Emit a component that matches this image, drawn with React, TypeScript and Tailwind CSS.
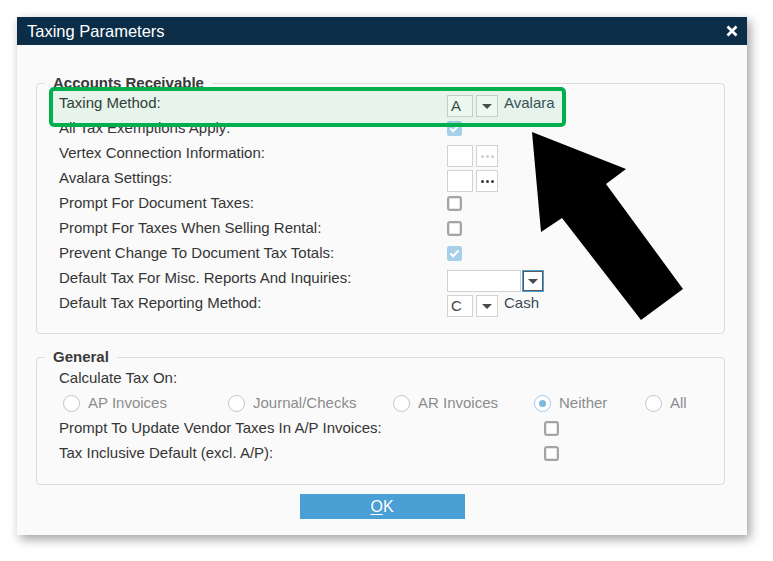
import React from 'react';

function Caret() {
  return (
    <svg width="10" height="5" viewBox="0 0 10 5">
      <polygon points="0,0 10,0 5,5" fill="#4a4a4a" />
    </svg>
  );
}

function DropBtn({ focused }: { focused?: boolean }) {
  return (
    <div
      className={
        focused
          ? 'mt-[5px] flex h-[22px] w-[22px] items-center justify-center border border-[#4b9fd5] bg-white shadow-[inset_0_0_0_1px_#5a5a5a]'
          : 'mt-[5px] flex h-[22px] w-[22px] items-center justify-center border border-[#d2d2d2] bg-white'
      }
    >
      <Caret />
    </div>
  );
}

function DotsBtn({ faded }: { faded?: boolean }) {
  const dot = faded ? 'h-[3px] w-[3px] rounded-full bg-[#cfcfcf]' : 'h-[3px] w-[3px] rounded-full bg-[#3a3a3a]';
  return (
    <div className="mt-[5px] flex h-[22px] w-[22px] items-center justify-center gap-[2px] border border-[#d2d2d2] bg-white">
      <span className={dot} />
      <span className={dot} />
      <span className={dot} />
    </div>
  );
}

function TextBox({ value, wide }: { value?: string; wide?: boolean }) {
  return (
    <div
      className={
        (wide ? 'w-[74px] ' : 'w-[26px] ') +
        'mt-[5px] flex h-[22px] items-end border border-[#d2d2d2] bg-white pb-[1px] pl-[3px] text-[15px] leading-[18px] text-[#444]'
      }
    >
      {value}
    </div>
  );
}

function Check({ checked }: { checked?: boolean }) {
  if (checked) {
    return (
      <div className="flex h-[15px] w-[15px] items-center justify-center rounded-[2px] bg-[#a6cfea]">
        <svg width="11" height="9" viewBox="0 0 11 9">
          <path d="M1.5 4.5 L4.2 7.2 L9.5 1.5" fill="none" stroke="#ffffff" strokeWidth="2" />
        </svg>
      </div>
    );
  }
  return <div className="h-[15px] w-[15px] rounded-[3px] border-2 border-[#a4a4a4] bg-white shadow-[inset_0_0_0_1px_#e6e6e6]" />;
}

function Radio({ label, on, w }: { label: string; on?: boolean; w: string }) {
  return (
    <div className={'flex items-center gap-[8px] ' + w}>
      <div
        className={
          on
            ? 'flex h-[17px] w-[17px] items-center justify-center rounded-full border border-[#9fcbe8] bg-white'
            : 'h-[17px] w-[17px] rounded-full border border-[#c4c4c4] bg-white'
        }
      >
        {on && <div className="h-[7px] w-[7px] rounded-full bg-[#7db6df]" />}
      </div>
      <span className="text-[#8c8c8c]">{label}</span>
    </div>
  );
}

function Row({ label, children, wide }: { label: string; children?: React.ReactNode; wide?: boolean }) {
  return (
    <div className="flex h-[25px] items-center">
      <div className={(wide ? 'w-[485px]' : 'w-[388px]') + ' shrink-0'}>{label}</div>
      <div className="flex items-center">{children}</div>
    </div>
  );
}

function Legend({ children }: { children: React.ReactNode }) {
  return (
    <span className="absolute -top-[10px] left-[8px] bg-[#fafafa] px-[8px] text-[15px] font-bold leading-[17px] text-[#3a3a3a]">
      {children}
    </span>
  );
}

export default function App() {
  return (
    <div className="relative h-[561px] w-[773px] overflow-hidden bg-white pl-[17px] pt-[17px] font-['Liberation_Sans',Arial,sans-serif] text-[15px] text-[#353535]">
      <div className="flex h-[518px] w-[730px] flex-col bg-[#fafafa] shadow-[3px_4px_10px_rgba(0,0,0,0.38)]">
        {/* Title bar */}
        <div className="flex h-[28px] shrink-0 items-center justify-between bg-[#0b2d48] pl-[10px] pr-[9px]">
          <span className="text-[16.5px] text-white">Taxing Parameters</span>
          <svg width="12" height="12" viewBox="0 0 12 12">
            <path d="M1.5 1.5 L10.5 10.5 M10.5 1.5 L1.5 10.5" stroke="#ffffff" strokeWidth="2.8" />
          </svg>
        </div>

        {/* Accounts Receivable */}
        <div className="relative ml-[19px] mr-[22px] mt-[38px] rounded-[4px] border border-[#dcdcdc] pb-[17px] pl-[22px] pt-[7px]">
          <Legend>Accounts Receivable</Legend>
          <Row label="Taxing Method:">
            <TextBox value="A" />
            <div className="ml-[3px]">
              <DropBtn />
            </div>
            <span className="ml-[6px] text-[#3d4a58]">Avalara</span>
          </Row>
          <Row label="All Tax Exemptions Apply:">
            <Check checked />
          </Row>
          <Row label="Vertex Connection Information:">
            <TextBox />
            <div className="ml-[3px]">
              <DotsBtn faded />
            </div>
          </Row>
          <Row label="Avalara Settings:">
            <TextBox />
            <div className="ml-[3px]">
              <DotsBtn />
            </div>
          </Row>
          <Row label="Prompt For Document Taxes:">
            <Check />
          </Row>
          <Row label="Prompt For Taxes When Selling Rental:">
            <Check />
          </Row>
          <Row label="Prevent Change To Document Tax Totals:">
            <Check checked />
          </Row>
          <Row label="Default Tax For Misc. Reports And Inquiries:">
            <TextBox wide />
            <div className="ml-[1px]">
              <DropBtn focused />
            </div>
          </Row>
          <Row label="Default Tax Reporting Method:">
            <TextBox value="C" />
            <div className="ml-[3px]">
              <DropBtn />
            </div>
            <span className="ml-[6px] text-[#3d4a58]">Cash</span>
          </Row>
        </div>

        {/* General */}
        <div className="relative ml-[19px] mr-[22px] mt-[23px] rounded-[4px] border border-[#dcdcdc] pb-[18px] pl-[22px] pt-[8px]">
          <Legend>General</Legend>
          <div className="flex h-[25px] items-center">Calculate Tax On:</div>
          <div className="ml-[4px] flex h-[25px] items-center">
            <Radio label="AP Invoices" w="w-[165px]" />
            <Radio label="Journal/Checks" w="w-[165px]" />
            <Radio label="AR Invoices" w="w-[141px]" />
            <Radio label="Neither" on w="w-[111px]" />
            <Radio label="All" w="w-auto" />
          </div>
          <Row label="Prompt To Update Vendor Taxes In A/P Invoices:" wide>
            <Check />
          </Row>
          <Row label="Tax Inclusive Default (excl. A/P):" wide>
            <Check />
          </Row>
        </div>

        <div className="mt-[9px] flex justify-center">
          <button className="h-[25px] w-[165px] bg-[#4a9fd4] text-[16px] text-white">
            <span className="underline underline-offset-2">O</span>K
          </button>
        </div>
      </div>

      {/* Annotation: highlight box */}
      <div className="pointer-events-none absolute left-[49px] top-[87px] h-[40px] w-[517px] rounded-[5px] border-[4px] border-[#00b04f] bg-[rgba(0,176,80,0.08)]" />

      {/* Annotation: arrow */}
      <svg className="pointer-events-none absolute left-0 top-0" width="773" height="561" viewBox="0 0 773 561">
        <polygon points="532,132 626,169 606,184 683,289 641,320 562,218 541,232" fill="#000000" />
      </svg>
    </div>
  );
}
